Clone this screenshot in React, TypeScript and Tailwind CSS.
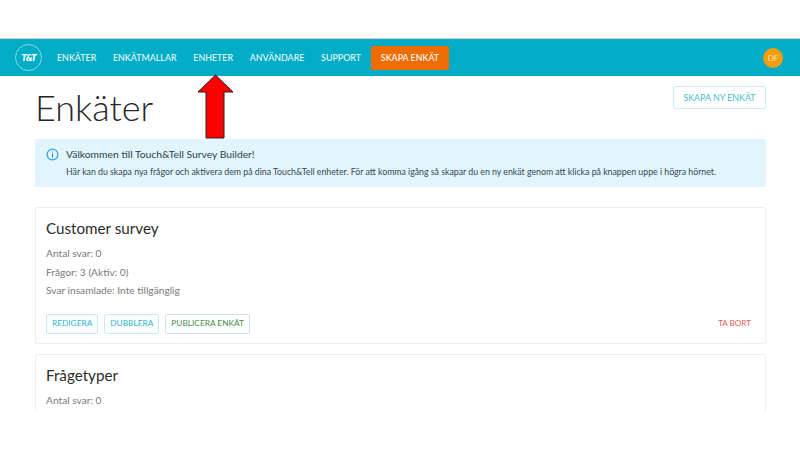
const navItems = ['ENKÄTER', 'ENKÄTMALLAR', 'ENHETER', 'ANVÄNDARE', 'SUPPORT']

function Navbar() {
  return (
    <nav className="flex h-[38px] items-center border-t border-[#d5d5d5] bg-[#00acc6] pl-[15px] pr-[17px]">
      <div className="flex h-[27px] w-[27px] items-center justify-center rounded-full border border-[#8fdbe6] text-[10px] font-black italic tracking-[-1px] text-white">
        T&amp;T
      </div>
      <div className="ml-[15px] flex items-center gap-[16.7px] text-[8.9px] font-medium text-[#eafafc]">
        {navItems.map((item) => (
          <span key={item}>{item}</span>
        ))}
        <span className="-ml-[6.7px] flex h-[24px] w-[78px] items-center justify-center rounded-[2px] bg-[#ef6c00] text-white">
          SKAPA ENKÄT
        </span>
      </div>
      <div className="ml-auto flex h-[20px] w-[20px] items-center justify-center rounded-full bg-[#f59c0f] text-[8px] text-[#fbe3b8]">
        DF
      </div>
    </nav>
  )
}

function OutlineButton({ label, tone }: { label: string; tone: 'blue' | 'green' }) {
  const cls = {
    blue: 'border-[#c5edf3] text-[#26b5cb]',
    green: 'border-[#d3e3d3] text-[#4b8b4f]',
  }[tone]
  return (
    <span className={`flex h-[20px] items-center rounded-[2px] border px-[5px] text-[8.3px] ${cls}`}>
      {label}
    </span>
  )
}

function SurveyCard({ title, lines, actions = true }: { title: string; lines: string[]; actions?: boolean }) {
  return (
    <div className="rounded-[2px] border border-[#efefef] px-[10px] pt-[9px] pb-[9px]">
      <h2 className="text-[15.2px] leading-[22px] text-[#2b2b2b]">{title}</h2>
      <div className="mt-[5px] flex flex-col text-[10.2px] leading-[18.5px] text-[#7a7a7a]">
        {lines.map((line) => (
          <p key={line}>{line}</p>
        ))}
      </div>
      {actions && (
        <div className="mt-[14px] flex items-center gap-[6px]">
          <OutlineButton label="REDIGERA" tone="blue" />
          <OutlineButton label="DUBBLERA" tone="blue" />
          <OutlineButton label="PUBLICERA ENKÄT" tone="green" />
          <span className="ml-auto pr-[4px] text-[8.1px] text-[#ea5a55]">TA BORT</span>
        </div>
      )}
    </div>
  )
}

function Arrow() {
  return (
    <svg className="absolute left-[197px] top-[74px]" width="38" height="66" viewBox="0 0 38 66">
      <path d="M18.5 1 L36 18 L27 18 L27 64 L9 64 L9 18 L1 18 Z" fill="#ff0000" stroke="#222" strokeWidth="1" />
    </svg>
  )
}

export default function App() {
  return (
    <div className="relative h-[450px] w-[800px] overflow-hidden bg-white pt-[38px] font-['Lato','Open_Sans',sans-serif]">
      <div className="h-[374px] overflow-hidden">
        <Navbar />
        <main className="pl-[35px] pr-[34px]">
          <div className="flex items-start justify-between">
            <h1 className="mt-[8px] text-[36px] font-light leading-[46px] text-[#262626]">Enkäter</h1>
            <span className="mt-[10px] flex h-[23px] w-[93px] items-center justify-center rounded-[2px] border border-[#c9eef4] text-[8.9px] text-[#45bcd0]">
              SKAPA NY ENKÄT
            </span>
          </div>
          <div className="mt-[9px] flex h-[48px] gap-[7px] rounded-[2px] bg-[#e3f5fc] pl-[11px] pt-[8px]">
            <svg className="mt-[1px] shrink-0" width="13" height="13" viewBox="0 0 24 24" fill="none" stroke="#2a9fe6" strokeWidth="2.2" strokeLinecap="round">
              <circle cx="12" cy="12" r="10" />
              <path d="M12 11v6M12 7v.5" />
            </svg>
            <div className="text-[#33475b]">
              <p className="text-[10.3px] leading-[15px] text-[#2b3f50]">Välkommen till Touch&amp;Tell Survey Builder!</p>
              <p className="mt-[3px] whitespace-nowrap text-[8.75px] leading-[14px]">
                Här kan du skapa nya frågor och aktivera dem på dina Touch&amp;Tell enheter. För att komma igång så skapar du en ny enkät genom att klicka på knappen uppe i högra hörnet.
              </p>
            </div>
          </div>
          <div className="mt-[20px] flex flex-col gap-[10px]">
            <SurveyCard title="Customer survey" lines={['Antal svar: 0', 'Frågor: 3 (Aktiv: 0)', 'Svar insamlade: Inte tillgänglig']} />
            <SurveyCard title="Frågetyper" lines={['Antal svar: 0']} actions={false} />
          </div>
        </main>
      </div>
      <Arrow />
    </div>
  )
}
